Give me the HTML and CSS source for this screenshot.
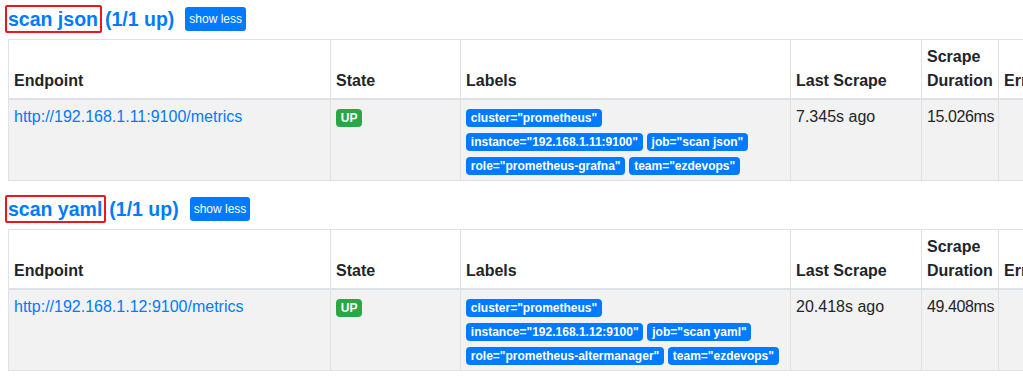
FILE: index.html
```html
<!DOCTYPE html>
<html lang="en">
<head>
<meta charset="utf-8">
<title>Targets</title>
<link rel="stylesheet" href="styles.css">
</head>
<body>
<div class="page">
  <section class="pool">
    <div class="pool-head">
      <h2 class="pool-title"><span class="mark"><a href="#">scan json</a></span><span class="count">(1/1 up)</span></h2>
      <button class="btn">show less</button>
    </div>
    <table class="targets">
      <colgroup>
        <col class="c-endpoint"><col class="c-state"><col class="c-labels"><col class="c-last"><col class="c-dur"><col class="c-err">
      </colgroup>
      <thead>
        <tr><th>Endpoint</th><th>State</th><th>Labels</th><th>Last Scrape</th><th>Scrape Duration</th><th>Error</th></tr>
      </thead>
      <tbody>
        <tr>
          <td><a href="#">http://192.168.1.11:9100/metrics</a></td>
          <td><span class="badge up">UP</span></td>
          <td>
            <div class="lbl-line"><span class="badge">cluster="prometheus"</span></div>
            <div class="lbl-line"><span class="badge">instance="192.168.1.11:9100"</span><span class="badge">job="scan json"</span></div>
            <div class="lbl-line"><span class="badge">role="prometheus-grafna"</span><span class="badge">team="ezdevops"</span></div>
          </td>
          <td>7.345s ago</td>
          <td class="dur">15.026ms</td>
          <td></td>
        </tr>
      </tbody>
    </table>
  </section>
  <section class="pool">
    <div class="pool-head">
      <h2 class="pool-title"><span class="mark"><a href="#">scan yaml</a></span><span class="count">(1/1 up)</span></h2>
      <button class="btn">show less</button>
    </div>
    <table class="targets">
      <colgroup>
        <col class="c-endpoint"><col class="c-state"><col class="c-labels"><col class="c-last"><col class="c-dur"><col class="c-err">
      </colgroup>
      <thead>
        <tr><th>Endpoint</th><th>State</th><th>Labels</th><th>Last Scrape</th><th>Scrape Duration</th><th>Error</th></tr>
      </thead>
      <tbody>
        <tr>
          <td><a href="#">http://192.168.1.12:9100/metrics</a></td>
          <td><span class="badge up">UP</span></td>
          <td>
            <div class="lbl-line"><span class="badge">cluster="prometheus"</span></div>
            <div class="lbl-line"><span class="badge">instance="192.168.1.12:9100"</span><span class="badge">job="scan yaml"</span></div>
            <div class="lbl-line"><span class="badge">role="prometheus-altermanager"</span><span class="badge">team="ezdevops"</span></div>
          </td>
          <td>20.418s ago</td>
          <td class="dur">49.408ms</td>
          <td></td>
        </tr>
      </tbody>
    </table>
  </section>
</div>
</body>
</html>
```

FILE: styles.css
```css
html, body {
  margin: 0;
  padding: 0;
  background: #fff;
  overflow: hidden;
}

body {
  font-family: "Liberation Sans", Arial, sans-serif;
  font-size: 16px;
  line-height: 1.5;
  color: #212529;
}

a {
  color: #007bff;
  text-decoration: none;
}

.page {
  padding: 4px 0 0 8px;
}

.pool {
  margin-bottom: 13px;
}

.pool-head {
  display: flex;
  align-items: center;
  height: 29px;
  margin-bottom: 6px;
}

.pool-title {
  margin: 0;
  font-size: 19.5px;
  font-weight: 700;
  line-height: 24px;
  color: #007bff;
  display: flex;
  align-items: center;
}

.mark {
  display: inline-block;
  border: 2px solid #f0141e;
  border-radius: 2px;
  margin-left: -3px;
  padding: 0 2px 0 1px;
  line-height: 24px;
}

.count {
  margin-left: 3px;
}

.btn {
  margin-left: 11px;
  font-family: inherit;
  font-size: 12px;
  line-height: 18px;
  padding: 3px 4px;
  color: #fff;
  background: #007bff;
  border: 0;
  border-radius: 3px;
}

.targets {
  border-collapse: collapse;
  table-layout: fixed;
  width: 1190px;
}

.c-endpoint { width: 322px; }
.c-state { width: 130px; }
.c-labels { width: 330px; }
.c-last { width: 131px; }
.c-dur { width: 77px; }
.c-err { width: 200px; }

.targets th,
.targets td {
  border: 1px solid #dee2e6;
  padding: 4.8px 5px;
  text-align: left;
  vertical-align: top;
}

.targets th {
  vertical-align: bottom;
  border-bottom: 2px solid #dee2e6;
  font-weight: 700;
}

.targets tbody tr {
  background: #f2f2f2;
}

.targets td {
  padding-top: 5.5px;
  padding-bottom: 3px;
}

.dur {
  white-space: nowrap;
  letter-spacing: -0.4px;
}

.lbl-line {
  height: 24px;
}

.badge {
  display: inline-block;
  margin-right: 4px;
  padding: 3px 4.8px;
  font-size: 12px;
  font-weight: 700;
  line-height: 1;
  color: #fff;
  background: #007bff;
  border-radius: 4px;
  white-space: nowrap;
  vertical-align: baseline;
}

.badge.up {
  background: #28a745;
}
```
